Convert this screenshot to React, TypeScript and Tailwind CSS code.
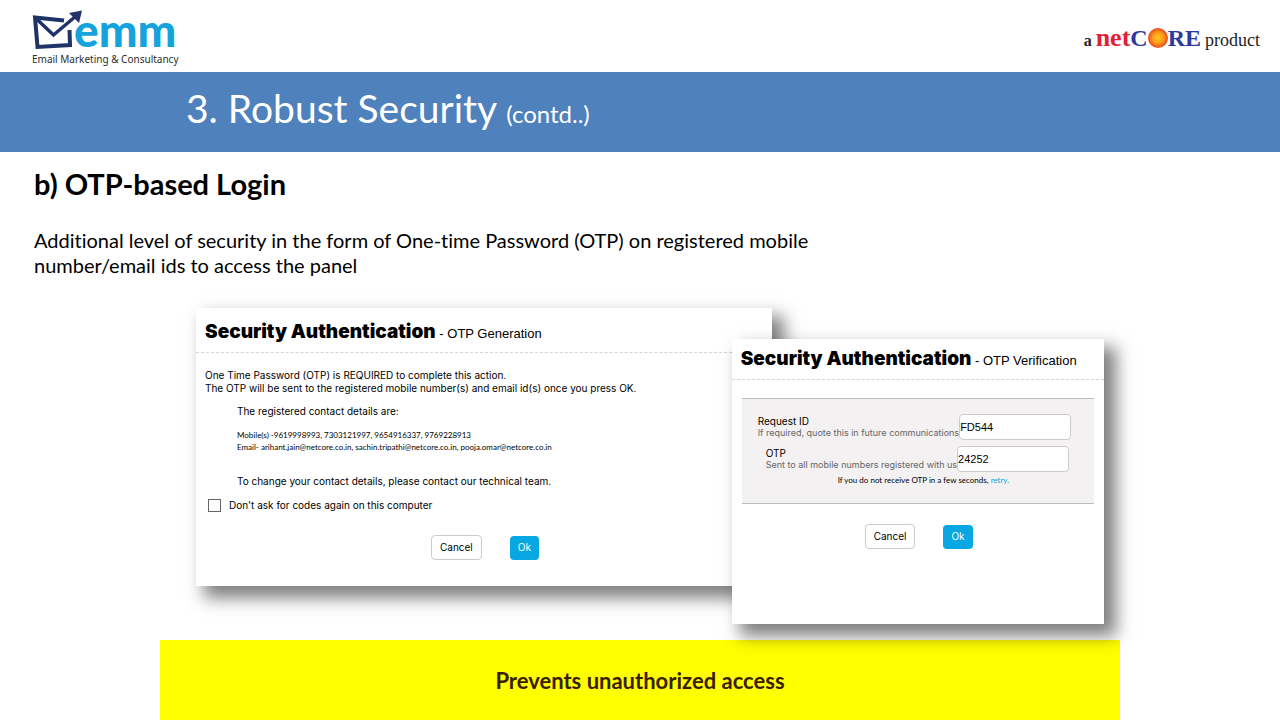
import { useState } from 'react';
import type { ReactNode } from 'react';

const REGISTERED_CONTACTS = [
  { label: 'Mobile(s) -', value: '9619998993, 7303121997, 9654916337, 9769228913' },
  { label: 'Email- ', value: 'arihant.jain@netcore.co.in, sachin.tripathi@netcore.co.in, pooja.omar@netcore.co.in' },
];

function EmmLogo() {
  return (
    <div className="w-36">
      <div className="flex items-end h-[42px]">
        <svg viewBox="0 0 50 42" className="w-[50px] h-[42px] shrink-0" fill="none" stroke="#1f3368">
          <path d="M32 11.500 L3 8.500 L5.500 38 L38 36 L37.500 21" strokeWidth="4" />
          <path d="M3 8.500 L21.500 26 L44 7" strokeWidth="3.500" />
          <path d="M37 4 L50 1.500 L47 14 Z" fill="#1f3368" stroke="none" />
        </svg>
        <span className="-ml-2 text-[46px] leading-[42px] font-black font-['Lato',sans-serif] text-[#14a3dc]">emm</span>
      </div>
      <p className="text-[10px] leading-4 whitespace-nowrap font-['Noto_Sans',sans-serif] text-[#2b2b2b]">
        Email Marketing &amp; Consultancy
      </p>
    </div>
  );
}

function NetcoreLogo() {
  return (
    <div className="flex items-baseline font-['Liberation_Serif',serif] font-bold text-[#222222]">
      <span className="text-base mr-1">a</span>
      <span className="text-[26px] leading-8 text-[#e31f35]">net</span>
      <span className="text-2xl leading-8 text-[#2c3a9c]">C</span>
      <svg viewBox="0 0 20 20" className="size-5 self-center" aria-label="O">
        <defs>
          <radialGradient id="sun">
            <stop offset="0%" stopColor="#ffc81e" />
            <stop offset="55%" stopColor="#fb9a1c" />
            <stop offset="100%" stopColor="#e8471c" />
          </radialGradient>
        </defs>
        <circle cx="10" cy="10" r="10" fill="url(#sun)" />
      </svg>
      <span className="text-2xl leading-8 text-[#2c3a9c]">RE</span>
      <span className="text-lg ml-1 font-normal">product</span>
    </div>
  );
}

function Panel({ subtitle, className, children }: { subtitle: string; className: string; children: ReactNode }) {
  return (
    <section className={`bg-white shadow-[10px_10px_16px_2px_rgba(0,0,0,0.5)] font-['Inter',sans-serif] text-[10px] text-black ${className}`}>
      <h3 className="px-[9px] pb-[6px] border-b border-dashed border-[#d4d4d4] font-['Liberation_Sans',sans-serif] text-[13px] leading-6 whitespace-nowrap">
        <span className="font-['Inter',sans-serif] text-[19px] leading-6 font-black">Security Authentication</span> - {subtitle}
      </h3>
      {children}
    </section>
  );
}

function PanelButtons({ className }: { className: string }) {
  return (
    <div className={`flex items-center gap-7 ${className}`}>
      <button type="button" className="h-[25px] px-2 rounded border border-[#cccccc] bg-white">Cancel</button>
      <button type="button" className="h-6 px-2 rounded bg-[#06a7e2] text-white">Ok</button>
    </div>
  );
}

function OtpGenerationPanel() {
  const [skipCodes, setSkipCodes] = useState(false);

  return (
    <Panel subtitle="OTP Generation" className="w-[63.4%] pt-3 pb-[26px]">
      <div className="px-[9px]">
        <p className="mt-4 leading-[13px]">
          One Time Password (OTP) is REQUIRED to complete this action.
          <br />
          The OTP will be sent to the registered mobile number(s) and email id(s) once you press OK.
        </p>
        <div className="pl-8">
          <p className="mt-2 leading-4">The registered contact details are:</p>
          <div className="mt-[10px] font-['Lato',sans-serif] text-[8px] leading-3 whitespace-nowrap">
            {REGISTERED_CONTACTS.map((c) => (
              <p key={c.label}>{c.label}{c.value}</p>
            ))}
          </div>
          <p className="mt-5 leading-4">To change your contact details, please contact our technical team.</p>
        </div>
        <label className="mt-2 ml-[3px] flex items-center gap-2 leading-4">
          <input
            type="checkbox"
            checked={skipCodes}
            onChange={(e) => setSkipCodes(e.target.checked)}
            className="size-[13px] appearance-none border border-[#666666] bg-white checked:bg-[#06a7e2]"
          />
          Don't ask for codes again on this computer
        </label>
      </div>
      <PanelButtons className="mt-[22px] ml-[235px]" />
    </Panel>
  );
}

function OtpVerificationPanel() {
  const [requestId, setRequestId] = useState('FD544');
  const [otp, setOtp] = useState('24252');

  return (
    <Panel subtitle="OTP Verification" className="relative flex-1 -ml-10 mt-[31px] pt-2 pb-[75px]">
      <div className="mt-[18px] mx-[10px] pt-[15px] pb-[15px] pl-4 border-y border-[#b9bdb9] bg-[#f3f1f2]">
        <div className="flex items-center">
          <label htmlFor="request-id" className="leading-3 whitespace-nowrap">
            Request ID
            <span className="block text-[9px] leading-3 text-[#666666]">If required, quote this in future communications</span>
          </label>
          <input
            id="request-id"
            value={requestId}
            onChange={(e) => setRequestId(e.target.value)}
            className="w-28 h-[26px] rounded border border-[#cccccc] bg-white font-['Liberation_Sans',sans-serif] text-[11px]"
          />
        </div>
        <div className="mt-[6px] pl-2 flex items-center">
          <label htmlFor="otp" className="leading-3 whitespace-nowrap">
            OTP
            <span className="block text-[9px] leading-3 text-[#666666]">Sent to all mobile numbers registered with us</span>
          </label>
          <input
            id="otp"
            value={otp}
            onChange={(e) => setOtp(e.target.value)}
            className="w-28 h-[26px] rounded border border-[#cccccc] bg-white font-['Liberation_Sans',sans-serif] text-[11px]"
          />
        </div>
        <p className="pl-20 font-['Lato',sans-serif] text-[8px] leading-4">
          If you do not receive OTP in a few seconds, <a href="#retry" className="text-[#06a7e2]">retry.</a>
        </p>
      </div>
      <PanelButtons className="mt-5 ml-[133px]" />
    </Panel>
  );
}

export default function App() {
  return (
    <div className="min-h-screen flex flex-col bg-white font-['Lato',sans-serif] [font-variant-ligatures:none]">
      <header className="h-[72px] shrink-0 pt-1 pl-8 pr-5 flex items-center justify-between">
        <EmmLogo />
        <NetcoreLogo />
      </header>

      <div className="h-20 shrink-0 bg-[#4f81bd] pl-[186px] pb-2 flex items-center text-white">
        <h1 className="text-[39px] leading-[48px]">
          3. Robust Security <span className="text-2xl">(contd..)</span>
        </h1>
      </div>

      <div className="pl-[34px] pt-4 text-black">
        <h2 className="text-[29px] leading-8 font-bold">b) OTP-based Login</h2>
        <p className="mt-7 max-w-[800px] text-xl leading-[25px]">
          Additional level of security in the form of One-time Password (OTP) on registered mobile number/email ids to access the panel
        </p>
      </div>

      <main className="relative w-3/4 mx-auto mt-[30px] pl-9 pr-4 flex items-start">
        <OtpGenerationPanel />
        <OtpVerificationPanel />
      </main>

      <footer className="w-3/4 mx-auto mt-4 h-20 flex items-center justify-center bg-[#ffff00]">
        <p className="text-[22px] font-bold text-[#3a2000]">Prevents unauthorized access</p>
      </footer>
    </div>
  );
}
